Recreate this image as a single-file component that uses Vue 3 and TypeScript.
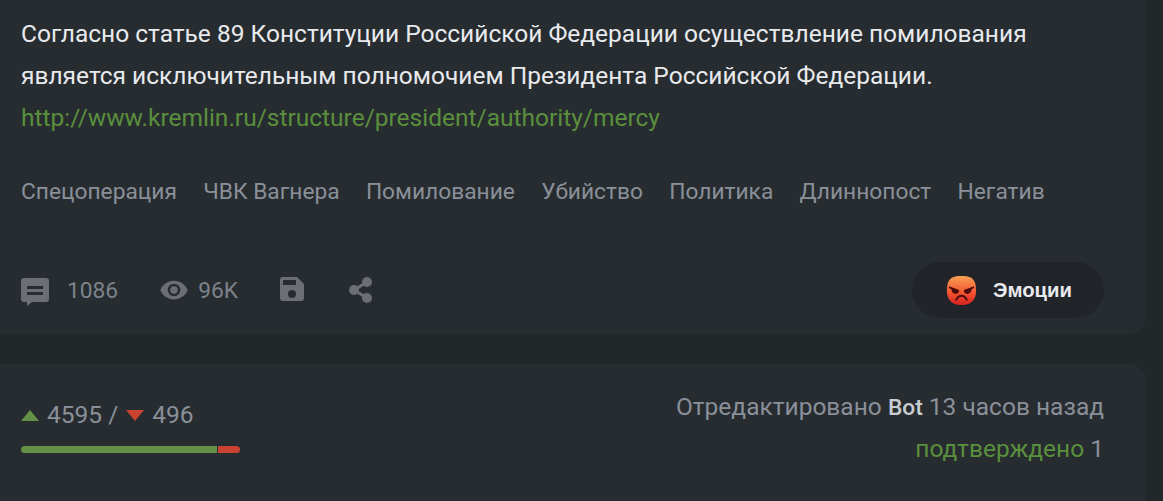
<script setup lang="ts">
const tags = ['Спецоперация', 'ЧВК Вагнера', 'Помилование', 'Убийство', 'Политика', 'Длиннопост', 'Негатив'];
const pluses = 4595;
const minuses = 496;
const plusWidth = `calc(${(pluses / (pluses + minuses)) * 100}% - 2px)`;
</script>

<template>
  <div class="page">
    <article class="post">
      <div class="post__body">
        <p class="post__text">
          Согласно статье 89 Конституции Российской Федерации осуществление помилования<br />
          является исключительным полномочием Президента Российской Федерации.<br />
          <a class="post__link" href="#">http://www.kremlin.ru/structure/president/authority/mercy</a>
        </p>
        <div class="tags">
          <span v-for="tag in tags" :key="tag" class="tags__item">{{ tag }}</span>
        </div>
      </div>
      <div class="post__footer">
        <div class="stats">
          <svg class="stats__comment" viewBox="0 0 28 28" aria-hidden="true">
            <path d="M3 0h22a3 3 0 0 1 3 3v18a3 3 0 0 1-3 3H11l-5 4v-4H3a3 3 0 0 1-3-3V3a3 3 0 0 1 3-3zM6 8v3h16V8zm0 6v3h16v-3z" fill-rule="evenodd" />
          </svg>
          <span class="stats__count">1086</span>
          <svg class="stats__eye" viewBox="0 0 24 24" aria-hidden="true">
            <path d="M12 4.500C7 4.500 2.730 7.610 1 12c1.730 4.390 6 7.500 11 7.500s9.270-3.110 11-7.500c-1.730-4.390-6-7.500-11-7.500zM12 17a5 5 0 1 1 0-10 5 5 0 0 1 0 10zm0-8a3 3 0 1 0 0 6 3 3 0 0 0 0-6z" />
          </svg>
          <span class="stats__views">96K</span>
          <svg class="stats__save" viewBox="0 0 24 24" aria-hidden="true">
            <path d="M17 0H2.700A2.700 2.700 0 0 0 0 2.700v18.600A2.700 2.700 0 0 0 2.700 24h18.600a2.700 2.700 0 0 0 2.700-2.700V7l-7-7zm-5 21a4 4 0 1 1 0-8 4 4 0 0 1 0 8zm4-13H3V3h13v5z" />
          </svg>
          <svg class="stats__share" viewBox="0 0 23 26" aria-hidden="true">
            <circle cx="5" cy="13" r="5" />
            <circle cx="18" cy="5" r="5" />
            <circle cx="18" cy="21" r="5" />
            <path d="M5 13L18 5M5 13l13 8" fill="none" stroke="#6b6f75" stroke-width="3" />
          </svg>
        </div>
        <button type="button" class="emotions">
          <svg class="emotions__face" viewBox="0 0 30 30" aria-hidden="true">
            <defs>
              <linearGradient id="angry" x1="0" y1="0" x2="0" y2="1">
                <stop offset="0" stop-color="#f7a052" />
                <stop offset="0.6" stop-color="#f4522f" />
                <stop offset="1" stop-color="#d4201f" />
              </linearGradient>
            </defs>
            <path d="M15 0C23 0 26 1.500 28 5c2 3.500 2 7 2 10.500 0 3.500-.5 6.500-2.500 9C25 28 21 30 15 30S5 28 2.500 24.500C.5 22 0 19 0 15.500 0 12 0 8.500 2 5 4 1.500 7 0 15 0z" fill="url(#angry)" />
            <path d="M2 10.500l10.500 4c.3 2.500-1.200 4-3.500 4s-4.700-2-4.200-4.500L2 12.500zM28 10.500l-10.500 4c-.3 2.500 1.200 4 3.500 4s4.700-2 4.200-4.500l2.800-1.500z" fill="#4d0b0b" />
            <path d="M9.500 24.500c1.500-2.700 3.200-4 5.500-4s4 1.300 5.500 4" fill="none" stroke="#4d0b0b" stroke-width="2" stroke-linecap="round" />
          </svg>
          <span class="emotions__label">Эмоции</span>
        </button>
      </div>
    </article>

    <section class="rating">
      <div class="rating__votes">
        <div class="rating__numbers">
          <span class="rating__up"></span>
          <span>{{ pluses }} /</span>
          <span class="rating__down"></span>
          <span>{{ minuses }}</span>
        </div>
        <div class="rating__bar">
          <span class="rating__plus" :style="{ width: plusWidth }"></span>
          <span class="rating__minus"></span>
        </div>
      </div>
      <div class="rating__meta">
        <div>Отредактировано <b class="rating__author">Bot</b> 13 часов назад</div>
        <div class="rating__approved"><a href="#">подтверждено</a> 1</div>
      </div>
    </section>
  </div>
</template>

<style>
html,
body {
  background: #22272a;
}
</style>

<style scoped>
.page {
  display: flex;
  flex-direction: column;
  gap: 30px;
  width: 1146px;
  height: 501px;
  overflow: hidden;
  font-family: Roboto, "Noto Sans", sans-serif;
}

.post {
  flex: none;
  height: 334px;
  display: flex;
  flex-direction: column;
  background: #272c30;
  border-bottom-right-radius: 16px;
}

.post__body {
  height: 244px;
  padding: 13px 21px 0;
  box-sizing: border-box;
  border-bottom: 1px solid #24292c;
}

.post__text {
  margin: 0;
  font-size: 24.5px;
  line-height: 42px;
  color: #e8eaed;
}

.post__link {
  color: #5a8f3d;
  text-decoration: none;
}

.tags {
  display: flex;
  gap: 26.25px;
  margin-top: 35px;
  font-size: 22.75px;
  line-height: 36px;
  color: #8a9099;
}

.post__footer {
  flex: 1;
  display: flex;
  align-items: center;
  justify-content: space-between;
  padding: 2px 42px 0 21px;
}

.stats {
  display: flex;
  align-items: center;
  font-size: 22.75px;
  color: #7d838b;
}

.stats svg {
  fill: #6b6f75;
  flex: none;
}

.stats__comment {
  width: 28px;
  height: 28px;
  margin-top: 3px;
}

.stats__count {
  margin-left: 18px;
}

.stats__eye {
  width: 30px;
  height: 30px;
  margin-left: 41px;
}

.stats__views {
  margin-left: 9px;
}

.stats__save {
  width: 24px;
  height: 24px;
  margin-left: 42px;
  margin-top: -2px;
}

.stats__share {
  width: 23px;
  height: 26px;
  margin-left: 45px;
}

.emotions {
  display: flex;
  align-items: center;
  gap: 17px;
  width: 192px;
  height: 56px;
  padding: 0 0 0 35px;
  border: none;
  border-radius: 28px;
  background: #212529;
  cursor: pointer;
}

.emotions__face {
  width: 29px;
  height: 31px;
}

.emotions__label {
  font-family: "Liberation Sans", Arial, sans-serif;
  font-size: 20.3px;
  font-weight: 700;
  color: #e8eaed;
}

.rating {
  flex: 1;
  display: flex;
  justify-content: space-between;
  padding: 22px 42px 0 21px;
  background: #272c30;
  border-top-right-radius: 16px;
  font-size: 24.5px;
  color: #8a9099;
}

.rating__votes {
  width: 219px;
  padding-top: 13px;
}

.rating__numbers {
  display: flex;
  align-items: center;
  gap: 8px;
  line-height: 32px;
}

.rating__up,
.rating__down {
  width: 0;
  height: 0;
  border-left: 9.5px solid transparent;
  border-right: 9.5px solid transparent;
}

.rating__up {
  border-bottom: 11px solid #649147;
}

.rating__down {
  border-top: 11px solid #c94232;
}

.rating__bar {
  display: flex;
  gap: 1px;
  height: 7px;
  margin-top: 15px;
  border-radius: 4px;
  overflow: hidden;
}

.rating__plus {
  background: #649147;
}

.rating__minus {
  flex: 1;
  background: #c94232;
}

.rating__meta {
  text-align: right;
  line-height: 41px;
}

.rating__author {
  font-size: 22.75px;
  font-weight: 500;
  color: #c9cdd2;
}

.rating__approved a {
  color: #5a8f3d;
  text-decoration: none;
}
</style>
